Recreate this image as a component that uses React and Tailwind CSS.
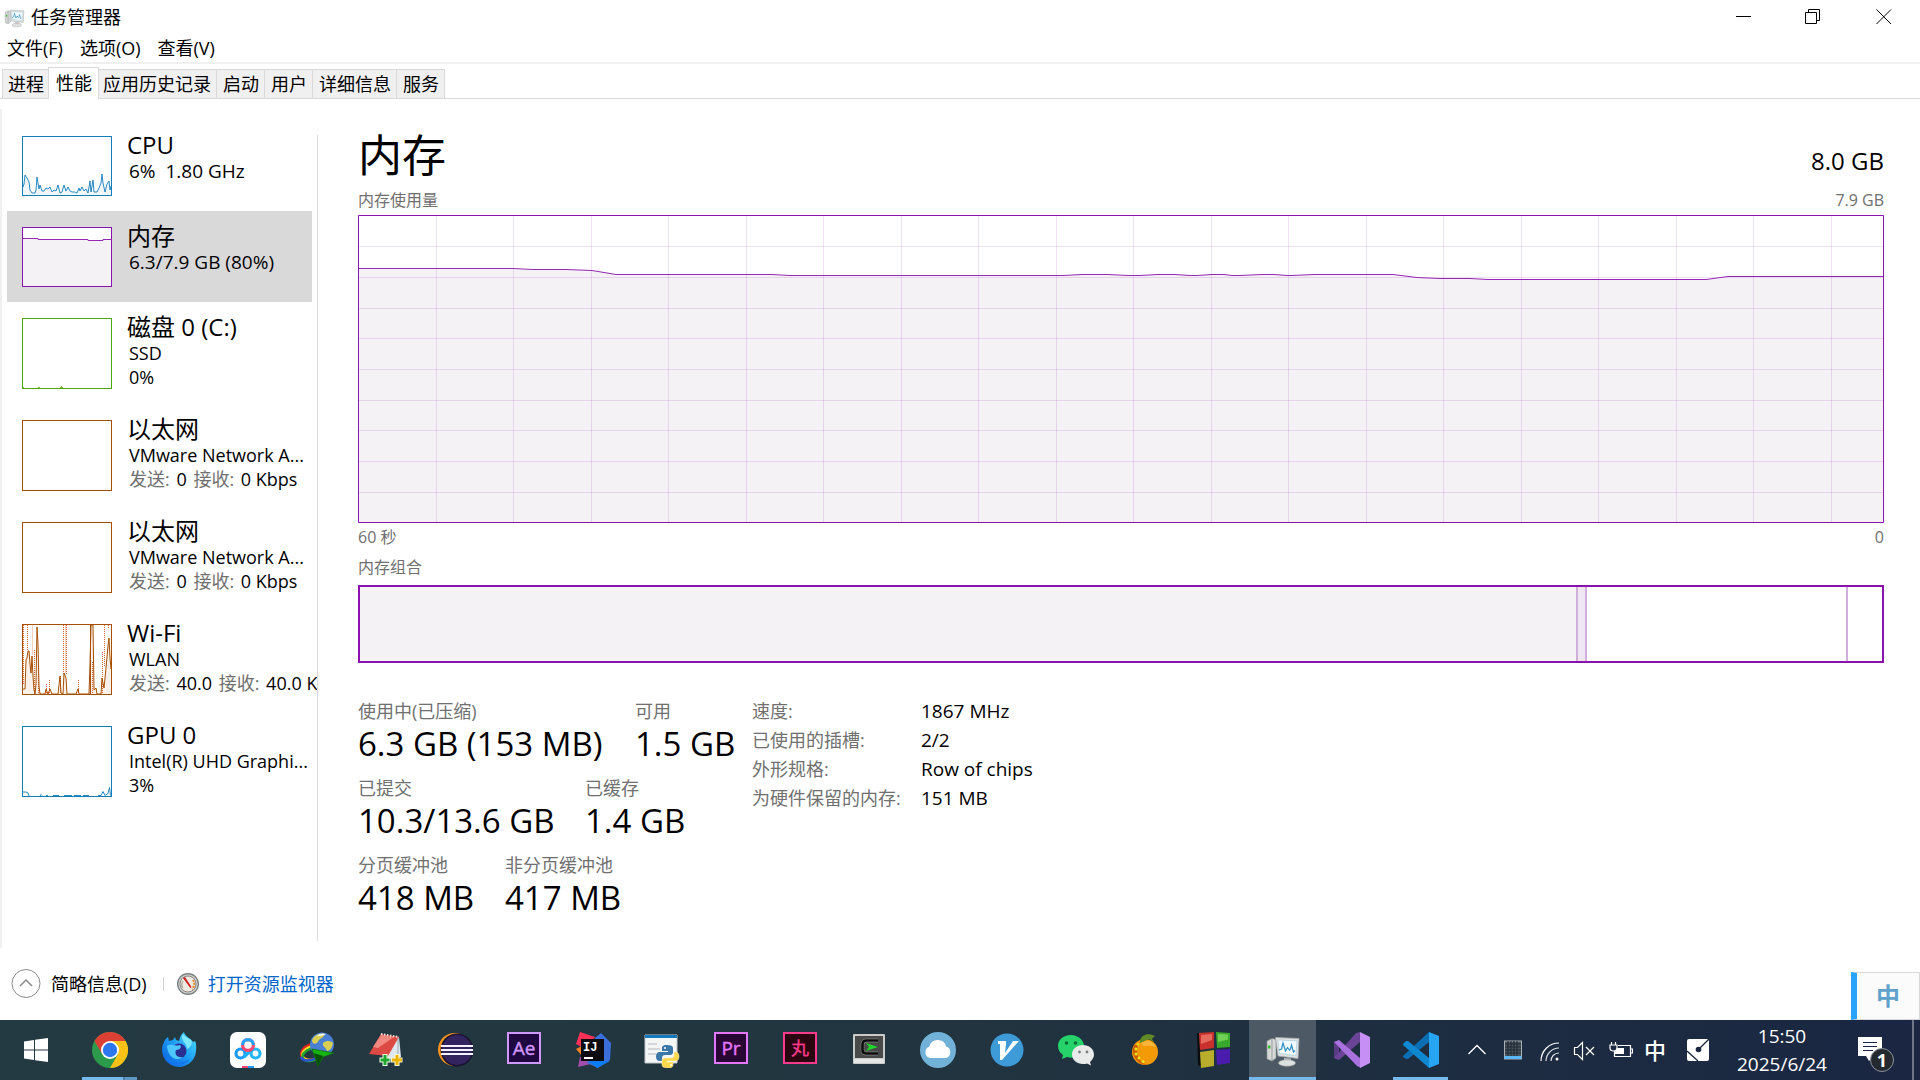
import React from "react";

const PURPLE = "#8b12ae";

/* ---------- small icons ---------- */

function MonitorIcon({ className }) {
  return (
    <svg viewBox="0 0 36 36" className={className} aria-hidden="true">
      <path d="M2 9 7 6.500 11 7.500V26l-4 3-5-2z" fill="#d6d8d8" stroke="#8c9090" strokeWidth=".6" />
      <path d="M7 7v21" stroke="#9da1a1" />
      <path d="M3 13.500h2.500v3H3z" fill="#35c02c" />
      <path d="M10.500 5.500 34 6.500 33 26.500 13 24z" fill="#dfe2e2" stroke="#a4a9a9" strokeWidth=".8" />
      <path d="M13 8 32 8.800 31 23.500 14.500 21.500z" fill="#f2faff" stroke="#9fc6dc" strokeWidth=".6" />
      <path d="m14 18 2.500-1 1.500-6 2.500 8 2-3.500 2 2.500 1-1 1-4 2 7 1.500-1.500" fill="none" stroke="#2f8fc4" strokeWidth="1.200" />
      <path d="m19 26 7 .5v4h-7z" fill="#b3b7b7" />
      <ellipse cx="22" cy="31" rx="8.500" ry="3.200" fill="#dfe1e1" stroke="#9fa3a3" strokeWidth=".6" />
    </svg>
  );
}

function GaugeIcon() {
  return (
    <svg viewBox="0 0 24 24" className="size-6" aria-hidden="true">
      <circle cx="12" cy="12" r="11" fill="#737b7a" />
      <circle cx="12" cy="12" r="9.800" fill="#c9cecd" />
      <circle cx="12" cy="12" r="8" fill="#efeae2" stroke="#77706a" strokeWidth=".8" />
      <path d="M17 8a7 7 0 0 1-1 9" fill="none" stroke="#e58a2c" strokeWidth="2" strokeDasharray="2 1" />
      <path d="M7 16a6 6 0 0 1 0-7" fill="none" stroke="#b8b0a6" strokeWidth="1.500" />
      <path d="m7 6 2-1 6.500 10-1.200 1z" fill="#d01c1c" />
    </svg>
  );
}

/* ---------- sidebar ---------- */

function Thumb({ h, color, children }) {
  return (
    <svg
      viewBox={`0 0 90 ${h}`}
      width="90"
      height={h}
      className="mt-4 ml-[15px] shrink-0"
      aria-hidden="true"
    >
      <rect x=".5" y=".5" width="89" height={h - 1} fill="#fff" />
      {children}
      <rect x=".5" y=".5" width="89" height={h - 1} fill="none" stroke={color} />
    </svg>
  );
}

const CPU_LINE =
  "1,51 2,48 3,39 5,42 7,46 8,54 10,57 13,57 14,54 15,41 17,53 18,49 20,55 22,55 24,52 26,53 28,51 30,56 32,54 34,55 36,49 38,57 40,56 42,49 44,55 46,51 48,55 50,56 53,56 55,57 57,52 58,55 60,51 62,55 64,53 66,57 68,45 69,56 71,44 72,56 75,56 77,52 79,47 80,38 81,47 83,56 85,48 87,45 88,54 89,50";
const WIFI_LINE =
  "1,65 3,65 4,36 5,34 6,27 7,27 8,40 9,49 10,32 11,52 12,66 13,70 14,60 15,3 16,20 17,62 18,70 23,70 24,65 26,70 28,65 30,70 36,70 38,52 39,69 41,70 42,49 44,54 45,70 54,70 56,65 57,70 67,70 68,40 69,1 71,1 72,66 74,64 75,70 79,70 80,54 82,64 84,44 86,22 87,14 88,34 89,45";

function CpuThumb() {
  return (
    <Thumb h={60} color="#117dbb">
      <polygon points={`1,59 ${CPU_LINE} 89,59`} fill="#f1f6fa" />
      <polyline points={CPU_LINE} fill="none" stroke="#117dbb" strokeWidth=".9" />
    </Thumb>
  );
}

function MemThumb() {
  return (
    <Thumb h={60} color={PURPLE}>
      <path d="M1 11.500H16V12.500H66V13.500H81V12.500H89V59H1z" fill="#f4f2f4" />
      <path d="M1 11.500H16V12.500H66V13.500H81V12.500H89" fill="none" stroke="#9528b4" />
    </Thumb>
  );
}

function DiskThumb() {
  return (
    <Thumb h={71} color="#4da60c">
      <path d="M1 69.500h1M16 69.500h2M38 69.500h3M39.500 68v2" stroke="#4da60c" strokeOpacity=".7" />
    </Thumb>
  );
}

function EthThumb() {
  return <Thumb h={71} color="#a74f01" />;
}

function WifiThumb() {
  return (
    <Thumb h={71} color="#a74f01">
      <polygon points={`1,70 ${WIFI_LINE} 89,70`} fill="#f9f1ea" />
      <path d="M10.500 1v30M43.500 1v48" stroke="#f7cdbb" strokeWidth="1" />
      <path
        d="M1.500 1v60M5.500 1v26M12.500 26v44M16.500 40v30M24.500 60v10M27.500 56v14M38.500 52v18M41.500 1v50M44.500 1v50M56.500 56v14M70.500 38v32M80.500 28v42M82.500 1v42M86.500 1v4"
        stroke="#d8623a"
        strokeDasharray="1 1"
      />
      <polyline points={WIFI_LINE} fill="none" stroke="#a74f01" strokeWidth="1" />
      <path d="M68.500 1v69" stroke="#a74f01" />
    </Thumb>
  );
}

function GpuThumb() {
  return (
    <Thumb h={71} color="#117dbb">
      <path
        d="M1 66h3l2 1 1 3M18 70l1-1.500 1 1M24 69.500h2M31 69.500h6M42 69.500h8M52 69.500h7M61 69.500h6M76 69.500h3l2-4 2 4 3-2 1.500-6 1 8"
        fill="none"
        stroke="#117dbb"
        strokeWidth=".9"
      />
    </Thumb>
  );
}

function Rates({ tx, rx }) {
  return (
    <>
      <span className="text-[#707070]">发送: </span>
      <span className="ml-0.5">{tx}</span>
      <span className="ml-0.5 text-[#707070]"> 接收: </span>
      <span className="ml-0.5">{rx}</span>
    </>
  );
}

const DEVICES = [
  { id: "cpu", title: "CPU", thumb: <CpuThumb />, lines: [<>6%&nbsp; 1.80 GHz</>], short: true },
  { id: "mem", title: "内存", thumb: <MemThumb />, lines: ["6.3/7.9 GB (80%)"], short: true, active: true },
  { id: "disk", title: "磁盘 0 (C:)", thumb: <DiskThumb />, lines: ["SSD", "0%"] },
  { id: "eth0", title: "以太网", thumb: <EthThumb />, lines: ["VMware Network A...", <Rates tx="0" rx="0 Kbps" />] },
  { id: "eth1", title: "以太网", thumb: <EthThumb />, lines: ["VMware Network A...", <Rates tx="0" rx="0 Kbps" />] },
  { id: "wifi", title: "Wi-Fi", thumb: <WifiThumb />, lines: ["WLAN", <Rates tx="40.0" rx="40.0 K" />] },
  { id: "gpu", title: "GPU 0", thumb: <GpuThumb />, lines: ["Intel(R) UHD Graphi...", "3%"] },
];

function Device({ item }) {
  return (
    <button
      type="button"
      aria-pressed={!!item.active}
      className={`flex w-[305px] items-start gap-[15px] text-left ${item.short ? "h-[91px]" : "h-[102px]"} ${
        item.active ? "bg-[#d9d9d9]" : ""
      }`}
    >
      {item.thumb}
      <span className="flex flex-col pt-2.5 whitespace-nowrap">
        <span className="text-[24px] leading-[29px]">{item.title}</span>
        {item.lines.map((line, i) => (
          <span key={i} className={`pl-0.5 leading-6 ${item.short ? "text-[19px]" : "text-[18px]"}`}>
            {line}
          </span>
        ))}
      </span>
    </button>
  );
}

/* ---------- main charts ---------- */

const V_LINES = Array.from({ length: 19 }, (_, i) => 78.5 + Math.floor(i * 77.5));
const H_LINES = [31.5, 62.5, 93.5, 123.5, 154.5, 185.5, 215.5, 246.5, 277.5];
const MEM_LINE =
  "0,53.5 155,53.5 175,54.5 208,54.5 234,55.5 258,59.5 414,59.5 432,60.5 705,60.5 724,59.5 750,59.5 770,60.5 782,60.5 800,59.5 817,59.5 832,60.5 839,60.5 854,59.5 866,59.5 874,60.5 882,60.5 904,59.5 916,59.5 929,60.5 934,60.5 956,59.5 1035,59.5 1059,62.5 1082,63.5 1112,63.5 1130,64.5 1348,64.5 1370,61.5 1526,61.5";

function UsageChart() {
  return (
    <svg
      viewBox="0 0 1526 308"
      preserveAspectRatio="none"
      className="block h-[308px] w-full"
      role="img"
      aria-label="内存使用量"
    >
      <polygon points={`0,308 ${MEM_LINE} 1526,308`} fill="#f4f2f5" />
      {V_LINES.map((x) => (
        <path key={x} d={`M${x} 0V308`} stroke={PURPLE} strokeOpacity=".13" vectorEffect="non-scaling-stroke" />
      ))}
      {H_LINES.map((y) => (
        <path key={y} d={`M0 ${y}H1526`} stroke={PURPLE} strokeOpacity=".13" vectorEffect="non-scaling-stroke" />
      ))}
      <polyline points={MEM_LINE} fill="none" stroke="#9528b4" vectorEffect="non-scaling-stroke" />
      <rect x=".5" y=".5" width="1525" height="307" fill="none" stroke={PURPLE} vectorEffect="non-scaling-stroke" />
    </svg>
  );
}

function Composition() {
  return (
    <div className="flex h-[78px] border-2 border-[#8b12ae]">
      <div className="w-[80%] border-r-2 border-[#cfaedb] bg-[#f4f2f5]" />
      <div className="w-[9px] border-r-2 border-[#cfaedb] bg-[#eee6f1]" />
      <div className="flex-1 border-r-2 border-[#cfaedb]" />
      <div className="w-[34px]" />
    </div>
  );
}

function Stat({ label, value, className }) {
  return (
    <div className={className}>
      <div className="text-[18px] leading-6 text-[#707070]">{label}</div>
      <div className="mt-px text-[33px] leading-10">{value}</div>
    </div>
  );
}

const HARDWARE = [
  ["速度:", "1867 MHz"],
  ["已使用的插槽:", "2/2"],
  ["外形规格:", "Row of chips"],
  ["为硬件保留的内存:", "151 MB"],
];

/* ---------- taskbar icons ---------- */

const ic = "size-9";

const ChromeIcon = () => (
  <svg viewBox="0 0 36 36" className={ic}>
    <circle cx="18" cy="18" r="18" fill="#2c9a4b" />
    <path d="M18 9h15.600A18 18 0 0 1 18 36l8-14z" fill="#fbc116" />
    <path d="M2.400 9A18 18 0 0 1 33.600 9H18z" fill="#dc4034" />
    <path d="M2.400 9l8 13.500L18 9z" fill="#dc4034" />
    <circle cx="18" cy="18" r="9" fill="#fff" />
    <circle cx="18" cy="18" r="7.200" fill="#2c77ee" />
  </svg>
);

const FirefoxIcon = () => (
  <svg viewBox="0 0 36 36" className={ic}>
    <defs>
      <linearGradient id="ff" x1="1" y1="0" x2="0" y2="1">
        <stop offset="0" stopColor="#4fe3ff" />
        <stop offset=".5" stopColor="#1b9cf5" />
        <stop offset="1" stopColor="#0a56d8" />
      </linearGradient>
    </defs>
    <path d="M23 0c1 5 7 6 9 10l2-1c2 4 1 9 1 10A17 17 0 1 1 3 10c1-2 2-4 4-5l1 4 4-1 2-3 1 3 3 1c1-4 2-7 5-9z" fill="url(#ff)" />
    <circle cx="18" cy="19" r="7.500" fill="#2a2f92" />
    <path d="M6 14c5-3 9 1 13-1 2 2 0 5-4 5-2 5 2 8 7 7-6 5-15 1-16-11z" fill="#4cc6fb" />
    <path d="M22 2c-4 6 4 8 4 15 4-2 6-6 4-9-2-2-6-3-8-6z" fill="#7fe6ff" />
    <path d="M3 21c3 8 14 13 26 6-5 8-22 11-26-6z" fill="#1577ee" />
  </svg>
);

const NetdiskIcon = () => (
  <svg viewBox="0 0 36 36" className={ic}>
    <rect width="36" height="36" rx="7" fill="#fff" />
    <circle cx="10.500" cy="21.500" r="4.500" fill="none" stroke="#1d9bfb" strokeWidth="3.200" />
    <circle cx="25.500" cy="21.500" r="4.500" fill="none" stroke="#25b6fb" strokeWidth="3.200" />
    <path d="m14 25 8-8" stroke="#1db0fb" strokeWidth="3.200" />
    <circle cx="18" cy="13" r="5.400" fill="none" stroke="#f8476e" strokeWidth="3.200" />
    <path d="M12.600 13a5.400 5.400 0 0 1 10.800 0" fill="none" stroke="#23a5fb" strokeWidth="3.200" />
    <path d="M12 34h6v2h-6z" fill="#f8476e" />
    <path d="M18 34h6v2h-6z" fill="#1d9bfb" />
  </svg>
);

const IdmIcon = () => (
  <svg viewBox="0 0 36 36" className={ic}>
    <ellipse cx="13" cy="20" rx="11" ry="7.500" transform="rotate(-20 13 20)" fill="none" stroke="#d92323" strokeWidth="3" />
    <ellipse cx="13" cy="21" rx="10" ry="6.500" transform="rotate(-20 13 21)" fill="none" stroke="#f4df1e" strokeWidth="2.500" />
    <ellipse cx="13" cy="22.500" rx="10" ry="6" transform="rotate(-20 13 22)" fill="none" stroke="#21a531" strokeWidth="2.500" />
    <path d="M2 25c2 5 10 4 15 1" fill="none" stroke="#2b4fd0" strokeWidth="2.500" />
    <circle cx="23" cy="12.500" r="12" fill="#4a7fd6" />
    <path d="M13 8c3-6 8-7 13-6-2 5-6 4-7 8-3 3-6 2-6-2zM24 11c4-3 8-2 10 0-1 6-4 8-6 8-1-4-5-4-4-8z" fill="#d8cf52" />
    <path d="M18 4c3-3 6-3 9-2-3 2-6 2-9 2z" fill="#eff6ff" />
    <path d="M13 17 35 21 24 25 19 34z" fill="#18b510" stroke="#0d6b0c" strokeWidth=".8" />
    <path d="M15 21 24 24 19 34z" fill="#075008" />
  </svg>
);

const NotebookIcon = () => (
  <svg viewBox="0 0 36 36" className={ic}>
    <path d="M14 4 31 5 33 25 20 27z" fill="#dfe8ee" />
    <path d="M13 2 31 5 20 24 1 22z" fill="#dd4a44" />
    <path d="M13 3 26 5 10 16 5 15z" fill="#f08a80" />
    <path d="M13 2 31 5" stroke="#f0e6e0" strokeWidth="2" strokeDasharray="1.500 1.500" />
    <path d="M30 6v18" stroke="#98a8b2" />
    <path d="M17 22v12M11.500 28h11" stroke="#e9ffe9" strokeWidth="5" />
    <path d="M17 23v10M12.500 28h9" stroke="#22a52c" strokeWidth="3" />
    <path d="M29 22v12M23 28h11.500" stroke="#fff8d2" strokeWidth="5" />
    <path d="M29 23v10M24 28h10" stroke="#eab308" strokeWidth="3" />
  </svg>
);

const EclipseIcon = () => (
  <svg viewBox="0 0 36 36" className={ic}>
    <circle cx="17.500" cy="17.500" r="16.500" fill="#f7941e" />
    <circle cx="20" cy="18" r="16.500" fill="#1a1430" />
    <circle cx="20" cy="18" r="15" fill="#33245f" />
    <path d="M4 14h32M4 18h32M4 22h32" stroke="#f4f2fa" strokeWidth="1.800" />
  </svg>
);

function AdobeIcon({ bg, fg, text, size = 19 }) {
  return (
    <svg viewBox="0 0 36 36" className={ic}>
      <rect x="2" y="1" width="32" height="30" fill={bg} stroke={fg} strokeWidth="2" />
      <text
        x="18"
        y="23"
        textAnchor="middle"
        fontSize={size}
        fill={fg}
        stroke={fg}
        strokeWidth=".4"
        fontFamily="'Open Sans','Noto Sans CJK SC',sans-serif"
      >
        {text}
      </text>
    </svg>
  );
}

const IntellijIcon = () => (
  <svg viewBox="0 0 36 36" className={ic}>
    <path d="M5 0 20 5 12 18 1 12z" fill="#fb3158" />
    <path d="M1 17 7 14 8 25z" fill="#f58220" />
    <path d="M5 25 18 28 16 32 3 35z" fill="#a04dab" />
    <path d="M20 6 26 1 36 11 35 28 23 36 12 31z" fill="#3a6fdc" />
    <path d="M14 29h21l-13 7z" fill="#0b7cf3" />
    <rect x="6" y="7" width="23" height="22" fill="#0c0b10" />
    <text x="8" y="19" fontSize="12" fontWeight="700" fill="#fff" fontFamily="'Liberation Mono',monospace">
      IJ
    </text>
    <path d="M9 26h9" stroke="#fff" strokeWidth="2" />
  </svg>
);

const PythonIcon = () => (
  <svg viewBox="0 0 36 36" className={ic}>
    <path d="M1 3h32v28H1z" fill="#f4f5f5" stroke="#c4c8ca" />
    <path d="M1 3h32v3H1z" fill="#1479bd" />
    <path d="M4 12h9M4 17h12M4 22h8" stroke="#b4b9bc" />
    <path d="M23 13c-5 0-5 2-5 4v2h6v1h-9c-4 0-4 9 0 9h3v-3c0-2 1-3 3-3h5c2 0 3-1 3-3v-4c0-2-2-3-6-3z" fill="#3b78a8" />
    <path d="M24 36c5 0 5-2 5-4v-2h-6v-1h9c4 0 4-9 0-9h-2v3c0 2-1 3-3 3h-6c-2 0-3 1-3 3v4c0 2 2 3 6 3z" fill="#fbd74a" stroke="#fff6c9" strokeWidth=".5" />
    <circle cx="21" cy="16" r="1" fill="#fff" />
    <circle cx="27" cy="33" r="1" fill="#fff" />
  </svg>
);

const CmderIcon = () => (
  <svg viewBox="0 0 36 36" className={ic}>
    <rect x="2" y="2" width="32" height="30" rx="1" fill="#c9cbc9" />
    <rect x="4" y="4" width="28" height="22" fill="#474a49" />
    <path d="M3 27h30v4H3z" fill="#e3e4e3" />
    <path d="M27 8.500H15.500c-3 0-4 1.500-4 4v6c0 2 1.500 3 4 3H27" fill="none" stroke="#a4a7a4" strokeWidth="3.400" />
    <path d="M27 8.500H15.500c-3 0-4 1.500-4 4v6c0 2 1.500 3 4 3H27" fill="none" stroke="#080908" strokeWidth="2.600" />
    <path d="m15 11 12 4-12 4 3-4z" fill="#22d32a" />
  </svg>
);

const CloudIcon = () => (
  <svg viewBox="0 0 36 36" className={ic}>
    <circle cx="18" cy="18" r="18" fill="#72b2d8" />
    <path d="M10 26a6 6 0 0 1-.5-11.500A8.500 8.500 0 0 1 26 14.500 6 6 0 0 1 26 26z" fill="#fff" />
  </svg>
);

const VIcon = () => (
  <svg viewBox="0 0 36 36" className={ic}>
    <circle cx="18" cy="18" r="16.500" fill="#3f9bd8" />
    <path d="M9 9h8v3l-1 9L24 9h6L13 28h-2V12H9z" fill="#fff" />
  </svg>
);

const WechatIcon = () => (
  <svg viewBox="0 0 36 36" className={ic}>
    <path d="M13 3C5 3 0 8 0 14c0 4 2 7 5 9l-1 4 5-2c13 3 17-5 17-11C26 8 20 3 13 3z" fill="#25d36a" />
    <circle cx="8.500" cy="11" r="1.800" fill="#0d6b36" />
    <circle cx="17.500" cy="11" r="1.800" fill="#0d6b36" />
    <path d="M25 13c-6 0-11 4-11 9.500S19 32 25 32c2 0 3 0 4-.5l4 2-1-3.500c2-2 4-4 4-7.500C36 17 31 13 25 13z" fill="#e9eaea" />
    <circle cx="21.500" cy="20" r="1.400" fill="#7d8080" />
    <circle cx="29" cy="20" r="1.400" fill="#7d8080" />
  </svg>
);

const OrangeIcon = () => (
  <svg viewBox="0 0 36 36" className={ic}>
    <circle cx="18" cy="20" r="13" fill="#f39a06" />
    <path d="M7 13c-4 10 4 20 13 20-8-3-12-11-9-20z" fill="#cf5c05" />
    <path d="M14 11c6-4 13-2 15 4-5-2-9-1-13-1z" fill="#fbb43a" />
    <path d="M13 9c1-6 8-9 15-5-1 1-3 2-3 3l2 3-5-3-9 4z" fill="#5f8a25" />
    <g fill="#e9e619">
      <circle cx="9" cy="17" r="1.500" />
      <circle cx="9" cy="22" r="1.500" />
      <circle cx="12" cy="26" r="1.500" />
      <circle cx="16" cy="29.500" r="1.500" />
      <circle cx="11" cy="12.500" r="1.200" />
    </g>
  </svg>
);

const BlocksIcon = () => (
  <svg viewBox="0 0 36 36" className={ic}>
    <path d="M1 1h2l2 33-3-1z" fill="#0c0c0e" />
    <path d="M3 1 18 0v16L4 18z" fill="#c9302c" />
    <path d="M20 0 34 1v14l-13 1z" fill="#3aa82a" />
    <path d="M4 20 18 18 18 34 5 36z" fill="#b8ae2c" />
    <path d="M20 18 34 17v14l-13 2z" fill="#4a1cae" />
    <path d="M5 3 16 2v6L5 12z" fill="#e46a5e" />
    <path d="M22 2 32 2.500v5L22 10z" fill="#6fd055" />
  </svg>
);

const VisualStudioIcon = () => (
  <svg viewBox="0 0 36 36" className={ic}>
    <path d="M0 10 5 8v20l-5-2z" fill="#5b3a86" />
    <path d="M0 26 22 1 26 0v10L5 28z" fill="#6b4497" />
    <path d="M0 10 5 8 27 27v9l-4-2z" fill="#a972de" />
    <path d="M26 0 36 5v26l-10 5z" fill="#c58ff5" />
  </svg>
);

const VscodeIcon = () => (
  <svg viewBox="0 0 36 36" className={ic}>
    <path d="M0 24 26 0v10L5 27H3L0 25z" fill="#0a6fb5" />
    <path d="M0 12 3 9h2l21 17v10L0 13z" fill="#1088d0" />
    <path d="M26 0 36 4v28l-10 4z" fill="#27a5f2" />
  </svg>
);

const APPS = [
  { name: "Chrome", icon: <ChromeIcon />, mark: "grouped" },
  { name: "Firefox", icon: <FirefoxIcon /> },
  { name: "网盘", icon: <NetdiskIcon /> },
  { name: "IDM", icon: <IdmIcon /> },
  { name: "Notebook", icon: <NotebookIcon /> },
  { name: "Eclipse", icon: <EclipseIcon /> },
  { name: "After Effects", icon: <AdobeIcon bg="#1f0740" fg="#cf96fb" text="Ae" /> },
  { name: "IntelliJ", icon: <IntellijIcon /> },
  { name: "Python", icon: <PythonIcon /> },
  { name: "Premiere", icon: <AdobeIcon bg="#2a0634" fg="#e277fb" text="Pr" /> },
  { name: "丸子", icon: <AdobeIcon bg="#29050f" fg="#f73a8c" text="丸" size={18} /> },
  { name: "Cmder", icon: <CmderIcon /> },
  { name: "Cloud", icon: <CloudIcon /> },
  { name: "V", icon: <VIcon /> },
  { name: "WeChat", icon: <WechatIcon /> },
  { name: "Orange", icon: <OrangeIcon /> },
  { name: "Blocks", icon: <BlocksIcon /> },
  { name: "任务管理器", icon: <MonitorIcon className="size-9" />, mark: "active" },
  { name: "Visual Studio", icon: <VisualStudioIcon /> },
  { name: "VS Code", icon: <VscodeIcon />, mark: "open" },
];

function AppButton({ app }) {
  const active = app.mark === "active";
  return (
    <button
      type="button"
      aria-label={app.name}
      className={`relative mx-px flex h-full w-[67px] shrink-0 items-center justify-center ${
        active ? "bg-[#4d5a66]" : ""
      }`}
    >
      {app.icon}
      {active && <span className="absolute inset-x-0 bottom-0 h-[3px] bg-[#76b9ed]" />}
      {app.mark === "open" && <span className="absolute inset-x-1.5 bottom-0 h-[3px] bg-[#76b9ed]" />}
      {app.mark === "grouped" && (
        <span className="absolute inset-x-1.5 bottom-0 flex h-[3px]">
          <span className="flex-1 bg-[#76b9ed]" />
          <span className="w-0.5 bg-[#4f7fa8]" />
          <span className="w-3 bg-[#5f97c4]" />
        </span>
      )}
    </button>
  );
}

function Tray() {
  return (
    <div className="flex h-full shrink-0 items-center text-white">
      <button type="button" aria-label="显示隐藏的图标" className="flex w-9 justify-center">
        <svg viewBox="0 0 20 20" className="size-5" fill="none" stroke="#fff" strokeWidth="1.300">
          <path d="m1.500 14 8.500-8.500L18.500 14" />
        </svg>
      </button>
      <button type="button" aria-label="触摸板" className="flex w-9 justify-center">
        <svg viewBox="0 0 20 20" className="size-5">
          <path d="M1 .5h18v19H1z" fill="#a9afb5" />
          <path d="M2 1.500h16v15H2z" fill="#4b545e" />
          <path d="M2 4h16M2 7h16M2 10h16M2 13h16M5 1v15M8 1v15M11 1v15M14 1v15" stroke="#1e2833" />
          <path d="M1.500 16h17v3h-17z" fill="#5cb8f5" />
        </svg>
      </button>
      <button type="button" aria-label="网络" className="flex w-[38px] justify-center">
        <svg viewBox="0 0 20 20" className="mt-1 size-5" fill="none" stroke="#fff" strokeWidth="1.200">
          <path d="M1 19C1 9 9 1 19 1" />
          <path d="M6 19C6 12 12 6 19 6" stroke="#dfe3e8" />
          <path d="M11 19c0-4 3-8 8-8" stroke="#dfe3e8" />
          <circle cx="17" cy="17" r="1.500" fill="#fff" stroke="none" />
        </svg>
      </button>
      <button type="button" aria-label="音量" className="flex w-[30px] justify-center">
        <svg viewBox="0 0 22 20" className="mt-0.5 h-5 w-[22px]" fill="none" stroke="#fff" strokeWidth="1.200">
          <path d="M1.500 6.500h3l5-5v17l-5-5h-3z" />
          <path d="m13 6 8 8M21 6l-8 8" />
        </svg>
      </button>
      <button type="button" aria-label="电池" className="flex w-11 justify-center">
        <svg viewBox="0 0 24 18" className="h-[18px] w-6" fill="none" stroke="#fff" strokeWidth="1.200">
          <path d="M9 4.500h12.500v11H5.500V10M22 8h1.500v4H22" />
          <path d="M2.500 1v3M6.500 1v3M1 4h7v3c0 2-1.500 3-3.500 3S1 9 1 7z" />
          <path d="M8 7h7v6H6v-2z" fill="#fff" stroke="none" />
        </svg>
      </button>
      <button type="button" className="w-6 text-center text-[22px] leading-[60px] font-medium">
        中
      </button>
      <button type="button" aria-label="手写笔" className="mr-[5px] flex w-[62px] justify-center">
        <svg viewBox="0 0 22 22" className="size-[22px]">
          <rect width="22" height="22" rx="2" fill="#fff" />
          <path d="M0 12 11 22M12 10 22 0" stroke="#1b2740" strokeWidth="1.300" />
          <circle cx="11.500" cy="10.500" r="2.800" fill="#1b2740" />
        </svg>
      </button>
      <button type="button" className="w-24 text-center text-[19px] leading-7">
        15:50
        <br />
        2025/6/24
      </button>
      <button type="button" aria-label="通知" className="flex w-20 justify-center">
        <span className="relative block h-[26px] w-6">
          <svg viewBox="0 0 24 24" className="size-6">
            <path d="M0 0h24v19h-8l-5 5-3-5H0z" fill="#fff" />
            <path d="M5 5.500h14M5 9.500h14M5 13.500h10" stroke="#1b2740" strokeWidth="1.200" />
          </svg>
          <span className="absolute top-[11px] left-3 flex size-6 items-center justify-center rounded-full border border-[#8d949c] bg-[#24282f] text-[18px] leading-none font-bold">
            1
          </span>
        </span>
      </button>
      <div className="mr-1.5 ml-0.5 h-full w-0.5 bg-[#6d7787]" />
    </div>
  );
}

function Taskbar() {
  return (
    <footer className="flex h-[60px] shrink-0 items-center bg-linear-to-r from-[#243a42] via-[#21343f] to-[#1a2642]">
      <button type="button" aria-label="开始" className="flex h-full w-[75px] shrink-0 items-center pl-6">
        <svg viewBox="0 0 24 24" className="size-6" fill="#fff">
          <path d="M0 3.500 10 2v9.500H0zM11 1.800 24 0v11.500H11zM0 12.500h10V22L0 20.500zM11 12.500h13V24l-13-1.800z" />
        </svg>
      </button>
      <div className="flex h-full min-w-0 flex-1">
        {APPS.map((a) => (
          <AppButton key={a.name} app={a} />
        ))}
      </div>
      <Tray />
    </footer>
  );
}

/* ---------- page ---------- */

const MENU = ["文件(F)", "选项(O)", "查看(V)"];
const TABS = ["进程", "性能", "应用历史记录", "启动", "用户", "详细信息", "服务"];

function tabClass(i) {
  if (i === 0) return "h-[29px] border-t border-l border-[#d9d9d9] bg-[#f0f0f0] pr-1 pl-[5px] leading-7";
  if (i === 1) return "-mb-px h-8 border-x border-t border-[#d9d9d9] bg-white pr-1.5 pl-[7px] pb-0.5 leading-7";
  if (i === 2) return "h-[29px] border-t border-r border-[#d9d9d9] bg-[#f0f0f0] pr-[5px] pl-1 leading-7";
  return "h-[29px] border-t border-r border-[#d9d9d9] bg-[#f0f0f0] pr-[5px] pl-1.5 leading-7";
}

export default function App() {
  return (
    <div className="relative flex min-h-screen flex-col bg-white font-['Open_Sans','Noto_Sans_CJK_SC',sans-serif] text-[18px] text-black">
      <header>
        <div className="flex h-[34px] items-center">
          <MonitorIcon className="ml-1 size-[21px]" />
          <h1 className="ml-1.5 flex-1 text-[18px] leading-6">任务管理器</h1>
          <button type="button" aria-label="最小化" className="flex h-8 w-[68px] items-center justify-center">
            <svg viewBox="0 0 16 16" className="size-4" stroke="#000">
              <path d="M0 7.500h15" />
            </svg>
          </button>
          <button type="button" aria-label="还原" className="flex h-8 w-[70px] items-center justify-center">
            <svg viewBox="0 0 16 16" className="size-4" fill="none" stroke="#000">
              <path d="M.5 3.500h11v11H.5zM3.500 3.500v-3h11v11h-3" />
            </svg>
          </button>
          <button type="button" aria-label="关闭" className="flex h-8 w-[72px] items-center justify-center">
            <svg viewBox="0 0 16 16" className="size-4" stroke="#000">
              <path d="m.5.5 14.500 14.500M15 .5.5 15" />
            </svg>
          </button>
        </div>
        <nav className="flex h-[30px] items-center gap-[17px] border-b-2 border-[#f0f0f0] pl-[7px]">
          {MENU.map((m) => (
            <button key={m} type="button" className="leading-6">
              {m}
            </button>
          ))}
        </nav>
      </header>

      <div role="tablist" className="flex h-[35px] items-end border-b border-[#d9d9d9] pl-0.5">
        {TABS.map((t, i) => (
          <button key={t} type="button" role="tab" aria-selected={i === 1} className={tabClass(i)}>
            {t}
          </button>
        ))}
      </div>

      <div className="mt-2.5 flex flex-1">
        <div className="w-0.5 bg-[#f0f0f0]" />
        <aside className="w-[315px] shrink-0 overflow-hidden pt-[11px] pl-[5px]">
          {DEVICES.map((d) => (
            <Device key={d.id} item={d} />
          ))}
        </aside>
        <div className="mt-[26px] mb-[7px] w-px bg-[#d9d9d9]" />
        <main className="min-w-0 flex-1 pt-[18px] pr-9 pl-10">
          <div className="flex items-end justify-between">
            <h2 className="text-[44px] leading-[56px]">内存</h2>
            <div className="text-[24px] leading-[44px]">8.0 GB</div>
          </div>
          <div className="mt-1.5 flex justify-between pb-1 text-[16px] leading-[22px] text-[#707070]">
            <span>内存使用量</span>
            <span>7.9 GB</span>
          </div>
          <UsageChart />
          <div className="mt-[3px] flex justify-between text-[16px] leading-[22px] text-[#707070]">
            <span>60 秒</span>
            <span>0</span>
          </div>
          <div className="mt-2 mb-[7px] text-[16px] leading-[22px] text-[#707070]">内存组合</div>
          <Composition />
          <div className="flex pt-9">
            <div className="flex w-[394px] flex-col gap-3 whitespace-nowrap">
              <div className="flex">
                <Stat className="w-[277px]" label="使用中(已压缩)" value="6.3 GB (153 MB)" />
                <Stat label="可用" value="1.5 GB" />
              </div>
              <div className="flex">
                <Stat className="w-[227px]" label="已提交" value="10.3/13.6 GB" />
                <Stat label="已缓存" value="1.4 GB" />
              </div>
              <div className="flex">
                <Stat className="w-[147px]" label="分页缓冲池" value="418 MB" />
                <Stat label="非分页缓冲池" value="417 MB" />
              </div>
            </div>
            <dl className="grid auto-rows-[29px] grid-cols-[169px_auto] content-start leading-6 whitespace-nowrap">
              {HARDWARE.map(([k, v]) => (
                <React.Fragment key={k}>
                  <dt className="text-[#707070]">{k}</dt>
                  <dd className="text-[19px]">{v}</dd>
                </React.Fragment>
              ))}
            </dl>
          </div>
        </main>
      </div>

      <div className="flex h-[72px] shrink-0 items-center pl-[11px]">
        <button type="button" className="flex items-center leading-6">
          <svg viewBox="0 0 30 30" className="size-[30px]" fill="none" aria-hidden="true">
            <circle cx="15" cy="14.500" r="14" stroke="#8a8a8a" />
            <path d="m9 17 6-6 6 6" stroke="#8a8a8a" strokeWidth="1.500" />
          </svg>
          <span className="ml-2.5">简略信息(D)</span>
        </button>
        <div className="mr-3 ml-4 h-3.5 w-px bg-[#d0d0d0]" />
        <a href="#resmon" className="flex items-center gap-2 leading-6 text-[#0066cc]">
          <GaugeIcon />
          打开资源监视器
        </a>
      </div>

      <button
        type="button"
        className="absolute right-0 bottom-[60px] flex h-12 w-[69px] items-center justify-center border border-[#d9d9d9] border-l-[6px] border-l-[#29a3ff] bg-[#fbfbfb] text-[24px] leading-none font-bold text-[#5fa3cd]"
      >
        中
      </button>

      <Taskbar />
    </div>
  );
}
